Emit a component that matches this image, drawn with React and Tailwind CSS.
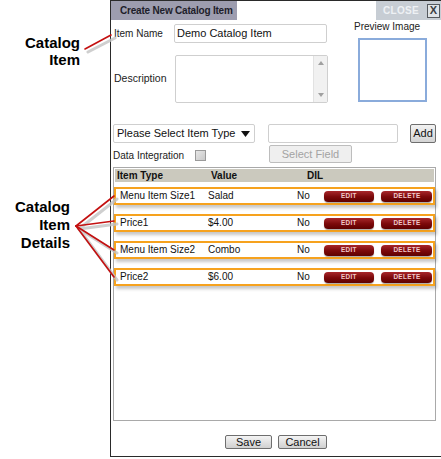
import React from "react";

function RedBtn({ label, w }) {
  return (
    <div
      className={`${w} h-[11px] rounded-[4px] bg-gradient-to-b from-[#a8262a] via-[#7e0a0c] to-[#5e0000] shadow-[0_1px_1px_rgba(0,0,0,0.35)] flex items-center justify-center`}
    >
      <span className="text-[8px] leading-none font-bold tracking-[0.4px] text-[#f0c9c9] scale-x-[0.8]">
        {label}
      </span>
    </div>
  );
}

function Row({ type, value }) {
  return (
    <div className="h-[18px] border-2 border-[#f6a21e] bg-white flex items-center text-[10px] leading-none text-[#111] shadow-[2px_3px_3px_rgba(0,0,0,0.22)]">
      <div className="w-[92px] pl-[4px] whitespace-nowrap">{type}</div>
      <div className="w-[89px]">{value}</div>
      <div className="w-[27px]">No</div>
      <RedBtn label="EDIT" w="w-[50px]" />
      <div className="w-[7px]" />
      <RedBtn label="DELETE" w="w-[51px]" />
    </div>
  );
}

export default function App() {
  return (
    <div className="relative w-[441px] h-[459px] bg-white flex font-['Liberation_Sans',Arial,sans-serif] overflow-hidden">
      {/* Annotation column */}
      <div className="w-[110px] flex flex-col text-[15px] font-bold text-black leading-[17px]">
        <div className="pt-[34px] pr-[30px] text-right">
          <div>Catalog</div>
          <div>Item</div>
        </div>
        <div className="mt-[130px] pr-[40px] text-right leading-[18px]">
          <div>Catalog</div>
          <div>Item</div>
          <div>Details</div>
        </div>
      </div>

      {/* Dialog */}
      <div className="w-[331px] h-[457px] border-t border-l border-b border-[#2a2a2a] flex flex-col">
        {/* Title bar */}
        <div className="h-[19px] flex">
          <div className="w-[126px] bg-[#9d9daf] flex items-center pl-[9px] text-[10px] font-bold text-[#1e1e2a] whitespace-nowrap tracking-[-0.2px]">
            Create New Catalog Item
          </div>
          <div className="flex-1 bg-white" />
          <div className="w-[65px] bg-[#c7cdd4] flex items-center pl-[7px]">
            <span className="text-[10px] font-bold text-[#eef1f4] tracking-[0.3px]">CLOSE</span>
            <div className="ml-[8px] w-[13px] h-[14px] border border-[#55595e] bg-[#dfe3e7] flex items-center justify-center text-[11px] font-bold leading-none text-[#3a3d42]">
              X
            </div>
          </div>
        </div>

        {/* Body */}
        <div className="flex-1 flex flex-col pl-[2px]">
          {/* Top section */}
          <div className="flex">
            <div className="flex flex-col pl-[1px]">
              <div className="mt-[4px] flex items-center h-[19px]">
                <div className="w-[60px] text-[10px] text-[#222]">Item Name</div>
                <div className="w-[153px] h-[19px] border border-[#cfcfcf] rounded-[2px] flex items-center pl-[2px] text-[11px] text-[#111]">
                  Demo Catalog Item
                </div>
              </div>
              <div className="mt-[12px] flex items-center h-[48px]">
                <div className="w-[61px] text-[10.5px] text-[#222]">Description</div>
                <div className="w-[153px] h-[48px] border border-[#cfcfcf] rounded-[2px] flex">
                  <div className="flex-1" />
                  <div className="w-[14px] bg-[#f1f1f1] border-l border-[#e2e2e2] flex flex-col items-center justify-between py-[5px]">
                    <svg width="6" height="4" viewBox="0 0 6 4"><path d="M0 4 L3 0 L6 4 Z" fill="#a0a0a0" /></svg>
                    <svg width="6" height="4" viewBox="0 0 6 4"><path d="M0 0 L3 4 L6 0 Z" fill="#a0a0a0" /></svg>
                  </div>
                </div>
              </div>
            </div>
            <div className="ml-[26px] flex flex-col">
              <div className="mt-[1px] text-[10px] leading-[12px] text-[#222]">Preview Image</div>
              <div className="mt-[5px] ml-[4px] w-[69px] h-[64px] border-2 border-[#8aabdb]" />
            </div>
          </div>

          {/* Item type section */}
          <div className="mt-[21px] flex items-center h-[19px]">
            <div className="w-[142px] h-[19px] border border-[#cfcfcf] rounded-[2px] flex items-center pl-[3px] text-[11px] text-[#111]">
              <span>Please Select Item Type</span>
              <svg className="ml-[6px]" width="9" height="6" viewBox="0 0 9 6"><path d="M0 0 L9 0 L4.5 6 Z" fill="#111" /></svg>
            </div>
            <div className="ml-[13px] w-[130px] h-[19px] border border-[#cfcfcf] rounded-[2px]" />
            <div className="ml-[12px] w-[26px] h-[19px] border border-[#6e6e6e] rounded-[2px] bg-gradient-to-b from-[#f2f2f2] to-[#d4d4d4] flex items-center justify-center text-[11px] text-[#111]">
              Add
            </div>
          </div>
          <div className="mt-[2px] flex items-center h-[18px]">
            <div className="w-[82px] text-[10px] text-[#222] pt-[2px]">Data Integration</div>
            <div className="w-[11px] h-[11px] mt-[3px] border border-[#9a9a9a] bg-gradient-to-br from-[#e6e6e6] to-[#c9c9c9]" />
            <div className="ml-[63px] w-[83px] h-[18px] border border-[#bdbdbd] rounded-[2px] bg-[#efefef] flex items-center justify-center text-[11px] text-[#a3a3a3]">
              Select Field
            </div>
          </div>

          {/* Table */}
          <div className="mt-[4px] w-[323px] h-[254px] border border-[#a9a9a9] flex flex-col">
            <div className="mx-[1px] mt-[1px] h-[13px] bg-[#cbc9be] flex items-center text-[10px] font-bold text-[#111] leading-none">
              <div className="w-[96px] pl-[2px]">Item Type</div>
              <div className="w-[96px]">Value</div>
              <div>DIL</div>
            </div>
            <div className="mt-[5px] flex flex-col gap-[9px]">
              <Row type="Menu Item Size1" value="Salad" />
              <Row type="Price1" value="$4.00" />
              <Row type="Menu Item Size2" value="Combo" />
              <Row type="Price2" value="$6.00" />
            </div>
          </div>

          {/* Footer */}
          <div className="mt-[14px] flex justify-center gap-[6px] pr-[2px]">
            <div className="w-[47px] h-[14px] border border-[#6e6e6e] rounded-[2px] bg-gradient-to-b from-[#f4f4f4] to-[#d0d0d0] flex items-center justify-center text-[11px] leading-none text-[#111]">
              Save
            </div>
            <div className="w-[49px] h-[14px] border border-[#6e6e6e] rounded-[2px] bg-gradient-to-b from-[#f4f4f4] to-[#d0d0d0] flex items-center justify-center text-[11px] leading-none text-[#111]">
              Cancel
            </div>
          </div>
        </div>
      </div>

      {/* Callout lines */}
      <svg className="absolute left-0 top-0 pointer-events-none" width="441" height="459" viewBox="0 0 441 459">
        <g stroke="#c4c4c4" strokeWidth="3" strokeLinecap="round" opacity="0.8">
          <line x1="88" y1="52" x2="115" y2="38" />
          <line x1="79" y1="229" x2="117" y2="199" />
          <line x1="79" y1="229" x2="117" y2="224" />
          <line x1="79" y1="229" x2="117" y2="253" />
          <line x1="79" y1="229" x2="117" y2="280" />
        </g>
        <g stroke="#c41010" strokeWidth="1.6" strokeLinecap="round">
          <line x1="85" y1="49" x2="111" y2="35" />
          <line x1="76" y1="226" x2="114" y2="196" />
          <line x1="76" y1="226" x2="114" y2="221" />
          <line x1="76" y1="226" x2="114" y2="250" />
          <line x1="76" y1="226" x2="114" y2="277" />
        </g>
      </svg>
    </div>
  );
}
